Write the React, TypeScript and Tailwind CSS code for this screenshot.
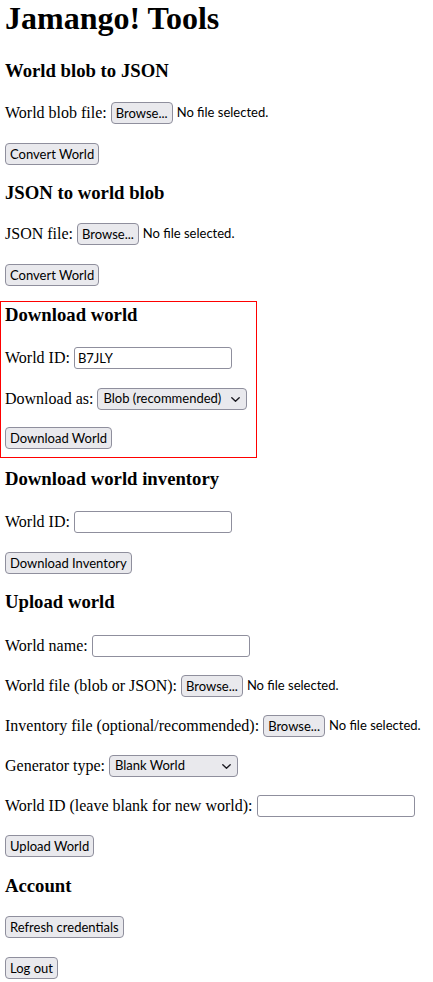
import React from 'react';

// Firefox-on-Windows default form look
const ui = "font-['Lato','Liberation_Sans',sans-serif] text-[13px] text-black";

function Btn({ children }: { children: React.ReactNode }) {
  return (
    <button
      type="button"
      className={`h-[22px] shrink-0 rounded-[4px] border border-[#8f8f9d] bg-[#e9e9ed] px-[4px] leading-none ${ui}`}
    >
      {children}
    </button>
  );
}

function FilePicker() {
  return (
    <>
      <Btn>Browse...</Btn>
      <span className={ui}>No file selected.</span>
    </>
  );
}

function TextBox({ value = '' }: { value?: string }) {
  return (
    <input
      type="text"
      defaultValue={value}
      className={`h-[22px] w-[158px] rounded-[3px] border border-[#8f8f9d] bg-white px-[3px] outline-none ${ui}`}
    />
  );
}

function Dropdown({ options, width }: { options: string[]; width: string }) {
  return (
    <span className={`relative inline-flex h-[22px] ${width}`}>
      <select
        className={`h-full w-full appearance-none rounded-[4px] border border-[#8f8f9d] bg-[#e9e9ed] pl-[5px] pr-[20px] outline-none ${ui}`}
      >
        {options.map((o) => (
          <option key={o}>{o}</option>
        ))}
      </select>
      <svg
        className="pointer-events-none absolute right-[7px] top-[9px]"
        width="9"
        height="5"
        viewBox="0 0 9 5"
        fill="none"
      >
        <path d="M0.8 0.8 L4.5 4.2 L8.2 0.8" stroke="#1c1b22" strokeWidth="1.4" strokeLinecap="round" strokeLinejoin="round" />
      </svg>
    </span>
  );
}

function Row({ className, children }: { className: string; children: React.ReactNode }) {
  return <div className={`flex h-[22px] items-center gap-[4px] whitespace-nowrap ${className}`}>{children}</div>;
}

function Section({ className, children }: { className: string; children: React.ReactNode }) {
  return <h3 className={`text-[18.72px] font-bold leading-[22px] ${className}`}>{children}</h3>;
}

export default function App() {
  return (
    <div className="min-h-screen bg-white px-[5px] text-[16px] text-black font-['Liberation_Serif','Times_New_Roman',serif]">
      <h1 className="text-[32px] font-bold leading-[37px]">Jamango! Tools</h1>

      {/* blob -> json */}
      <Section className="mt-[23px]">World blob to JSON</Section>
      <Row className="mt-[20px]">
        <span>World blob file:</span>
        <FilePicker />
      </Row>
      <Row className="mt-[19px]">
        <Btn>Convert World</Btn>
      </Row>

      {/* json -> blob */}
      <Section className="mt-[17px]">JSON to world blob</Section>
      <Row className="mt-[19px]">
        <span>JSON file:</span>
        <FilePicker />
      </Row>
      <Row className="mt-[19px]">
        <Btn>Convert World</Btn>
      </Row>

      {/* download (highlighted) */}
      <div className="-mx-[5px] mt-[15px] w-[257px] border border-[#ff0000] px-[4px] pb-[8px]">
        <Section className="mt-[2px]">Download world</Section>
        <Row className="mt-[21px]">
          <span>World ID:</span>
          <TextBox value="B7JLY" />
        </Row>
        <Row className="mt-[19px]">
          <span>Download as:</span>
          <Dropdown width="w-[150px]" options={['Blob (recommended)', 'JSON']} />
        </Row>
        <Row className="mt-[17px]">
          <Btn>Download World</Btn>
        </Row>
      </div>

      {/* inventory */}
      <Section className="mt-[10px]">Download world inventory</Section>
      <Row className="mt-[21px]">
        <span>World ID:</span>
        <TextBox />
      </Row>
      <Row className="mt-[19px]">
        <Btn>Download Inventory</Btn>
      </Row>

      {/* upload */}
      <Section className="mt-[17px]">Upload world</Section>
      <Row className="mt-[22px]">
        <span>World name:</span>
        <TextBox />
      </Row>
      <Row className="mt-[18px]">
        <span>World file (blob or JSON):</span>
        <FilePicker />
      </Row>
      <Row className="mt-[18px]">
        <span>Inventory file (optional/recommended):</span>
        <FilePicker />
      </Row>
      <Row className="mt-[18px]">
        <span>Generator type:</span>
        <Dropdown width="w-[129px]" options={['Blank World', 'Default']} />
      </Row>
      <Row className="mt-[18px]">
        <span>World ID (leave blank for new world):</span>
        <TextBox />
      </Row>
      <Row className="mt-[18px]">
        <Btn>Upload World</Btn>
      </Row>

      {/* account */}
      <Section className="mt-[18px]">Account</Section>
      <Row className="mt-[19px]">
        <Btn>Refresh credentials</Btn>
      </Row>
      <Row className="mt-[19px]">
        <Btn>Log out</Btn>
      </Row>
    </div>
  );
}
